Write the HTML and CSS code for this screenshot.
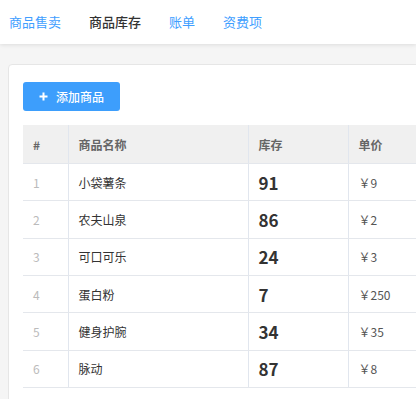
FILE: index.html
```html
<!DOCTYPE html>
<html lang="zh-CN">
<head>
<meta charset="utf-8">
<title>商品库存</title>
<link rel="stylesheet" href="styles.css">
</head>
<body>
<nav class="nav">
  <a class="tab">商品售卖</a>
  <a class="tab active">商品库存</a>
  <a class="tab">账单</a>
  <a class="tab">资费项</a>
</nav>
<main class="main">
  <section class="card">
    <button class="btn">
      <svg class="plus" width="9" height="9" viewBox="0 0 9 9"><path d="M4.5 0.5v8M0.5 4.5h8" stroke="#fff" stroke-width="2"/></svg>
      <span>添加商品</span>
    </button>
    <table class="tbl">
      <colgroup>
        <col class="c1"><col class="c2"><col class="c3"><col class="c4">
      </colgroup>
      <thead>
        <tr><th>#</th><th>商品名称</th><th>库存</th><th>单价</th></tr>
      </thead>
      <tbody>
        <tr><td class="idx">1</td><td>小袋薯条</td><td class="stock">91</td><td class="price">￥9</td></tr>
        <tr><td class="idx">2</td><td>农夫山泉</td><td class="stock">86</td><td class="price">￥2</td></tr>
        <tr><td class="idx">3</td><td>可口可乐</td><td class="stock">24</td><td class="price">￥3</td></tr>
        <tr><td class="idx">4</td><td>蛋白粉</td><td class="stock">7</td><td class="price">￥250</td></tr>
        <tr><td class="idx">5</td><td>健身护腕</td><td class="stock">34</td><td class="price">￥35</td></tr>
        <tr><td class="idx">6</td><td>脉动</td><td class="stock">87</td><td class="price">￥8</td></tr>
      </tbody>
    </table>
  </section>
</main>
</body>
</html>
```
FILE: styles.css
```css
html, body {
  margin: 0;
  padding: 0;
  width: 416px;
  height: 399px;
  overflow: hidden;
  background: #f5f5f5;
  font-family: "Noto Sans CJK SC", "Noto Sans", sans-serif;
}
.nav {
  height: 44px;
  background: #fff;
  box-shadow: 0 1px 4px rgba(0, 0, 0, 0.1);
  display: flex;
  align-items: center;
  gap: 28px;
  padding-left: 9px;
  position: relative;
  z-index: 1;
}
.tab {
  font-size: 13px;
  color: #409eff;
  line-height: 18px;
  padding-bottom: 1px;
  cursor: pointer;
}
.tab.active {
  color: #333;
  font-weight: 500;
}
.main {
  padding: 20px 0 0 8px;
}
.card {
  width: 560px;
  height: 400px;
  background: #fff;
  border: 1px solid #e6e6e6;
  border-radius: 4px;
  padding: 17px 14px 0 14px;
  box-sizing: border-box;
}
.btn {
  display: flex;
  align-items: center;
  gap: 8px;
  height: 29px;
  width: 97px;
  padding: 0 0 0 16px;
  border: none;
  border-radius: 3px;
  background: #3d9efc;
  color: #fff;
  font-family: inherit;
  font-size: 12px;
  font-weight: 500;
  box-sizing: border-box;
}
.plus { display: block; }
.tbl {
  margin-top: 14px;
  border-collapse: collapse;
  table-layout: fixed;
  width: 520px;
  font-size: 12px;
}
.c1 { width: 45px; }
.c2 { width: 180px; }
.c3 { width: 100px; }
.c4 { width: 195px; }
.tbl th {
  background: #f0f0f0;
  height: 38px;
  padding: 0 10px;
  text-align: left;
  color: #666;
  font-weight: 700;
  border-bottom: 1px solid #e4e7ec;
  border-left: 1px solid #e1e6ee;
}
.tbl td {
  height: 36.35px;
  padding: 0 10px;
  color: #333;
  border-bottom: 1px solid #e4e7ec;
  border-left: 1px solid #e1e6ee;
}
.tbl th:first-child, .tbl td:first-child { border-left: none; }
.tbl td.idx { color: #bbb; }
.tbl td.stock {
  font-size: 17px;
  font-weight: 700;
  color: #333;
}
.tbl td.price { color: #555; }
```
